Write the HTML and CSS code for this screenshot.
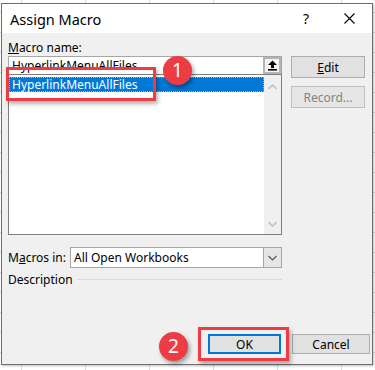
FILE: index.html
```html
<!DOCTYPE html>
<html lang="en">
<head>
  <meta charset="UTF-8" />
  <title>Assign Macro</title>
  <link rel="stylesheet" href="styles.css">
</head>
<body>
  <div class="dialog">
    <div class="titlebar">
      <span class="title">Assign Macro</span>
      <span class="help">?</span>
      <span class="close">
        <svg width="11" height="11" viewBox="0 0 11 11"><path d="M0.5 0.5L10.5 10.5M10.5 0.5L0.5 10.5" stroke="#000" stroke-width="1.1" fill="none"/></svg>
      </span>
    </div>
    <div class="content">
      <div class="main">
        <div class="left">
          <div class="label"><u>M</u>acro name:</div>
          <div class="namebox">
            <span class="nametext">HyperlinkMenuAllFiles</span>
            <span class="upbtn">
              <svg width="11" height="11" viewBox="0 0 11 11"><path d="M5.5 0.5L10 5H7V8H4V5H1Z" fill="#000"/><rect x="1" y="9" width="9" height="1.6" fill="#000"/></svg>
            </span>
          </div>
          <div class="list">
            <div class="items">
              <div class="item selected">HyperlinkMenuAllFiles</div>
            </div>
            <div class="scrollbar">
              <svg width="9" height="6" viewBox="0 0 9 6"><path d="M0.5 5L4.5 1L8.5 5" stroke="#c2c2c2" stroke-width="1.6" fill="none"/></svg>
              <svg width="9" height="6" viewBox="0 0 9 6"><path d="M0.5 1L4.5 5L8.5 1" stroke="#c2c2c2" stroke-width="1.6" fill="none"/></svg>
            </div>
          </div>
        </div>
        <div class="side">
          <button class="btn"><u>E</u>dit</button>
          <button class="btn disabled">Record...</button>
        </div>
      </div>
      <div class="row">
        <span class="row-label">M<u>a</u>cros in:</span>
        <div class="select">
          <span class="select-text">All Open Workbooks</span>
          <span class="select-btn">
            <svg width="9" height="6" viewBox="0 0 9 6"><path d="M0.5 1L4.5 5L8.5 1" stroke="#555" stroke-width="1.2" fill="none"/></svg>
          </span>
        </div>
      </div>
      <div class="desc">
        <span>Description</span>
        <span class="desc-line"></span>
      </div>
      <div class="footer">
        <button class="btn ok">OK</button>
        <button class="btn cancel">Cancel</button>
      </div>
    </div>

    <!-- annotations -->
    <div class="mark mark-list"></div>
    <div class="mark mark-ok"></div>
    <div class="badge badge-1">1</div>
    <div class="badge badge-2">2</div>
  </div>
</body>
</html>
```

FILE: styles.css
```css
body {
  margin: 0;
  width: 375px;
  height: 370px;
  overflow: hidden;
  font-family: "Noto Sans", "Open Sans", sans-serif;
  font-size: 12px;
  color: #000;
  background-color: #fff;
  background-image:
    linear-gradient(90deg, #d8d8d8 1px, transparent 1px),
    linear-gradient(#d8d8d8 1px, transparent 1px);
  background-size: 64px 20px;
  background-position: 21px 12px;
}
.dialog {
  position: relative;
  box-sizing: border-box;
  width: 372px;
  height: 362px;
  margin: 3px 0 0 1px;
  border: 1px solid #6e6e6e;
  box-shadow: 1px 1px 2px rgba(0, 0, 0, 0.25);
  background: #f0f0f0;
  display: flex;
  flex-direction: column;
}
.titlebar {
  height: 29px;
  background: #fff;
  display: flex;
  align-items: center;
  padding-left: 8px;
}
.title {
  font-size: 14.5px;
  flex: 1;
}
.help {
  font-size: 14px;
  width: 41px;
}
.close {
  width: 28px;
  display: flex;
}
.content {
  flex: 1;
  display: flex;
  flex-direction: column;
  padding: 0 6px 0 6px;
}
.main {
  display: flex;
  gap: 9px;
}
.left {
  width: 274px;
}
.label {
  height: 16px;
  line-height: 16px;
  padding-top: 7px;
}
.namebox {
  box-sizing: border-box;
  height: 18px;
  border: 1px solid #a6a6a6;
  border-bottom: none;
  background: #fff;
  display: flex;
  align-items: center;
}
.nametext {
  flex: 1;
  padding-left: 3px;
}
.upbtn {
  box-sizing: border-box;
  width: 18px;
  height: 17px;
  border: 2px solid #b4b4b4;
  background: #f4f4f4;
  display: flex;
  align-items: center;
  justify-content: center;
}
.list {
  box-sizing: border-box;
  height: 161px;
  border: 1px solid #7f7f7f;
  background: #fff;
  display: flex;
}
.items {
  flex: 1;
  padding-top: 2px;
}
.item {
  height: 13px;
  line-height: 13px;
  padding-left: 2px;
}
.item.selected {
  background: #0078d7;
  color: #fff;
  border: 1px dotted #f2a23a;
}
.scrollbar {
  width: 17px;
  background: #f0f0f0;
  display: flex;
  flex-direction: column;
  align-items: center;
  justify-content: space-between;
  padding: 9px 0 7px;
}
.side {
  padding-top: 23px;
  display: flex;
  flex-direction: column;
  gap: 8px;
}
.btn {
  box-sizing: border-box;
  width: 74px;
  height: 22px;
  font-family: inherit;
  font-size: 12px;
  color: #000;
  background: #e1e1e1;
  border: 1px solid #adadad;
  padding: 0;
}
.btn.disabled {
  color: #838383;
  border-color: #bfbfbf;
  background: #e6e6e6;
}
.row {
  display: flex;
  align-items: center;
  margin-top: 12px;
  height: 21px;
}
.row-label {
  width: 62px;
}
.select {
  box-sizing: border-box;
  width: 212px;
  height: 21px;
  border: 1px solid #a6a6a6;
  background: #fff;
  display: flex;
  align-items: center;
}
.select-text {
  flex: 1;
  padding-left: 3px;
}
.select-btn {
  box-sizing: border-box;
  width: 18px;
  height: 19px;
  border-left: 1px solid #a6a6a6;
  background: #e5e5e5;
  display: flex;
  align-items: center;
  justify-content: center;
}
.desc {
  display: flex;
  align-items: center;
  gap: 4px;
  width: 274px;
  height: 18px;
  margin-top: 2px;
}
.desc-line {
  flex: 1;
  height: 1px;
  background: #dadada;
}
.footer {
  margin-top: auto;
  margin-right: -4px;
  display: flex;
  justify-content: flex-end;
  gap: 11px;
  padding: 0 0 10px 0;
}
.footer .btn {
  height: 20px;
}
.btn.ok {
  width: 73px;
  border: 2px solid #0078d7;
}
.btn.cancel {
  width: 78px;
}
.mark {
  position: absolute;
  border: 3px solid #ee3c44;
  box-shadow: 2px 3px 4px rgba(0, 0, 0, 0.3);
}
.mark-list {
  left: 4px;
  top: 63px;
  width: 144px;
  height: 28px;
}
.mark-ok {
  left: 196px;
  top: 323px;
  width: 85px;
  height: 28px;
}
.badge {
  position: absolute;
  width: 29px;
  height: 29px;
  border-radius: 50%;
  background: #ee3c44;
  color: #fff;
  font-size: 19px;
  line-height: 29px;
  text-align: center;
  box-shadow: 2px 3px 4px rgba(0, 0, 0, 0.35);
}
.badge-1 {
  left: 161px;
  top: 52px;
}
.badge-2 {
  left: 157px;
  top: 328px;
}
```
